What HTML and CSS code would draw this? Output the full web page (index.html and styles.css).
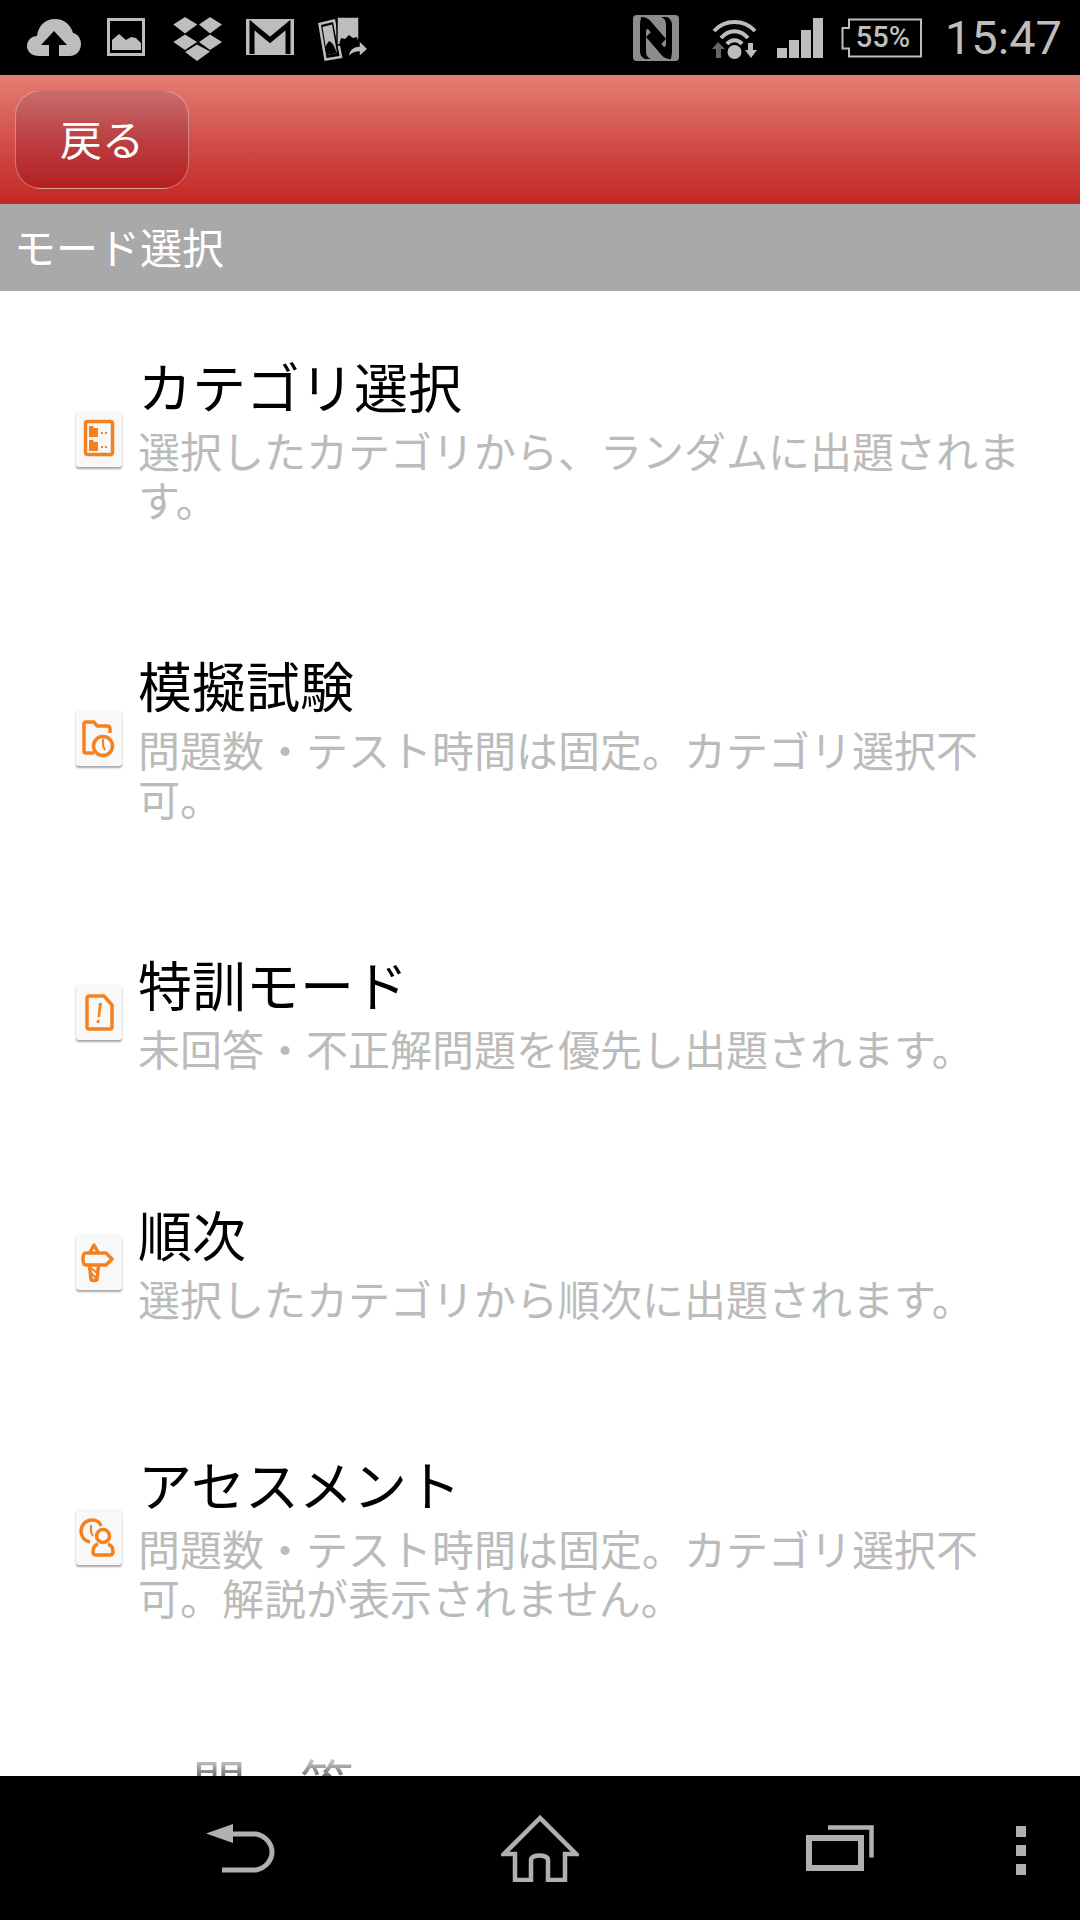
FILE: index.html
```html
<!DOCTYPE html>
<html lang="ja">
  <head>
    <title>モード選択</title>
    <link rel="stylesheet" href="styles.css">
  </head>
  <body>
    <div class="app">
      <div class="status-bar">
        <div class="status-left">
          <svg width="56" height="42" viewBox="0 0 56 42"><path class="st" d="M12 39C5 39 0 35 0 29c0-6 5-10 10-10C11 9 18 2 28 2c9 0 16 6 18 14 5 1 8 6 8 11 0 7-5 12-11 12z"/><path d="M27 14 14 28h8v13h10V28h8z" fill="#000"/></svg>
          <svg width="42" height="42" viewBox="0 0 42 42"><rect class="st-line" x="1.5" y="2.5" width="35" height="35" stroke-width="3"/><path class="st" d="M5 33V23l7-6 7 6 5-3 5 1 5 5v7z"/></svg>
          <svg width="49" height="46" viewBox="0 0 49 46"><path class="st" d="M.3 9.500 12 2l12.300 7.500L12 18.500zM26 9.500 37 2l12 7.500-12 9zM.3 27 12 19.500 24 27l-12 8zM26 27l11-7.500L49 27l-12 8zM24 29.500l13 7-13 9.500-12-9z"/></svg>
          <svg width="48" height="37" viewBox="0 0 48 37"><path class="st" d="M0 0h48v36H0z"/><path d="M6 35V6l18 15L42 6v29" fill="none" stroke="#000" stroke-width="5"/></svg>
          <svg width="50" height="46" viewBox="0 0 50 46"><path class="st-line" d="M1.500 9 16 5.500 23 42 7.500 44.500z" stroke-width="2.500"/><path class="st" d="M4.500 12 14 9.500 19 38 9 40z"/><path d="M7 32l4-6 3 2 2 3 3 7-10 2z" fill="#000"/><path class="st" d="M19 2h22v28H19z" stroke="#000" stroke-width="1.500"/><path d="M21 30l2-7 4 1 4-4 4 3 4-1 2 8z" fill="#000"/><path class="st" d="M30 43c0-8 5-12 11-12v-6l9 9-9 8v-5c-4 0-8 2-11 6z" stroke="#000" stroke-width="1.500"/></svg>
        </div>
        <div class="status-right">
          <svg width="61" height="46" viewBox="0 0 61 46"><rect x="0" y="0" width="46" height="46" rx="4" fill="#8c8c8c"/><path id="nfc-band" d="M8 2c6 0 8 2 12 7l13 15-5 5L15 14c-2 0-2 2-2 4v18c0 4 1 6 5 8h-6c-4-2-5-5-5-8V10c0-4 1-6 1-8z" fill="#000"/><use href="#nfc-band" transform="rotate(180 23 23)"/></svg>
          <svg width="47" height="42" viewBox="0 0 47 42"><g class="st-line" stroke-width="4"><path d="M2 14C13 2 32 2 43 14"/><path d="M9 21C17 12 28 12 36 21"/><path d="M15 27C19 22 26 22 30 27"/></g><circle class="st" cx="22.5" cy="35" r="7"/><path d="M6 25l7 7H9v9H4v-9H0z" fill="#666"/><path class="st" d="M36 26h5v7h4l-6 8-6-8h3z"/></svg>
          <svg width="46" height="40" viewBox="0 0 46 40"><path class="st" d="M0 30h10v10H0zM12 22h10v18H12zM24 12h10v28H24zM36 0h10v40H36z"/></svg>
          <svg width="86" height="40" viewBox="0 0 86 40"><path class="st-line" d="M8 1.5h72v37H8v-8H1.5V10H8z" stroke-width="2"/><text x="42" y="29" class="batt-text" text-anchor="middle">55%</text></svg>
          <div class="clock">15:47</div>
        </div>
      </div>

      <div class="red-bar">
        <div class="back-btn">戻る</div>
      </div>
      <div class="section-bar">モード選択</div>

      <div class="mode-list">
        <div class="mode-row">
          <div class="mode-icon">
            <svg width="46" height="56" viewBox="0 0 46 56"><rect class="ic" x="9.5" y="10.5" width="27" height="33" rx="2"/><path class="ic-fill" d="M13 15h4l1 2h4v9H13zM13 29h4l1 2h4v9H13z"/><path class="ic-fill" d="M25 21h2v2h-2zM29 21h2v2h-2zM25 35h2v2h-2zM29 35h2v2h-2z"/></svg>
          </div>
          <div class="mode-text">
            <div class="mode-title">カテゴリ選択</div>
            <div class="mode-desc">選択したカテゴリから、ランダムに出題されます。</div>
          </div>
        </div>
        <div class="mode-row">
          <div class="mode-icon">
            <svg width="46" height="56" viewBox="0 0 46 56"><path class="ic" d="M18 43H10c-1.500 0-2-1-2-2V14c0-1.500 1-2 2-2h8l3 4h10c2 0 3 1 3 3v4"/><circle class="ic" cx="27" cy="36" r="9.500"/><path class="ic-thin" d="M27 29v7l2 4"/></svg>
          </div>
          <div class="mode-text">
            <div class="mode-title">模擬試験</div>
            <div class="mode-desc">問題数・テスト時間は固定。カテゴリ選択不可。</div>
          </div>
        </div>
        <div class="mode-row">
          <div class="mode-icon">
            <svg width="46" height="56" viewBox="0 0 46 56"><path class="ic" d="M13 12h15l8 9v22c0 1.500-1 2-2 2H13c-1 0-2-.5-2-2V14c0-1 1-2 2-2z"/><path class="ic-fill" d="M23 19h3l-2 14h-2.500zM21 36h2.800l-.5 3h-2.800z"/></svg>
          </div>
          <div class="mode-text">
            <div class="mode-title">特訓モード</div>
            <div class="mode-desc">未回答・不正解問題を優先し出題されます。</div>
          </div>
        </div>
        <div class="mode-row">
          <div class="mode-icon">
            <svg width="46" height="56" viewBox="0 0 46 56"><path class="ic" d="M14 18l4-7 4 7"/><path class="ic" d="M10 19h20l6 6-6 6H10c-2 0-3-3-3-6s1-6 3-6z"/><path class="ic" d="M13.500 32l1.500 13c0 2 6 2 6 0l1.500-13"/><path class="ic-thin" d="M15 34l6 5M15 39l6 6"/></svg>
          </div>
          <div class="mode-text">
            <div class="mode-title">順次</div>
            <div class="mode-desc">選択したカテゴリから順次に出題されます。</div>
          </div>
        </div>
        <div class="mode-row">
          <div class="mode-icon">
            <svg width="46" height="56" viewBox="0 0 46 56"><path class="ic" d="M14 33C8 32 5 27 5 22c0-6 5-11 11-11 4 0 8 2 9 6"/><path class="ic-thin" d="M15 16v7l2 4"/><circle class="ic" cx="27" cy="27" r="6.500"/><path class="ic" d="M22 35c-3 1-5 3-5 8 0 2 1 3 3 3h14c2 0 3-1 3-3 0-5-2-7-5-8"/></svg>
          </div>
          <div class="mode-text">
            <div class="mode-title">アセスメント</div>
            <div class="mode-desc">問題数・テスト時間は固定。カテゴリ選択不可。解説が表示されません。</div>
          </div>
        </div>
        <div class="mode-row">
          <div class="mode-text">
            <div class="mode-title mode-title-last">一問一答</div>
          </div>
        </div>
        <div class="list-fade"></div>
      </div>

      <div class="nav-bar">
        <svg width="69" height="49" viewBox="0 0 69 49"><path class="nav-fill" d="M0 9.500 27 0v19z"/><path class="nav-line" d="M25 10H50C60 12 66 20 66 28S60 44 50 46H16" stroke-width="5"/></svg>
        <svg width="78" height="68" viewBox="0 0 78 68"><path class="nav-line" d="M39 4 3 40h11v26h16V46c0-6 17-6 17 0v20h17V40h11z" stroke-width="4.500"/></svg>
        <svg width="68" height="46" viewBox="0 0 68 46"><rect class="nav-line" x="3" y="13" width="52" height="30" stroke-width="6"/><path class="nav-line" d="M22 2.500h43.500v30" stroke-width="4.500"/></svg>
        <div class="nav-dots">
          <span></span>
          <span></span>
          <span></span>
        </div>
      </div>
    </div>
  </body>
</html>
```

FILE: styles.css
```css
body {
  margin: 0;
  font-family: "Noto Sans CJK JP", "Noto Sans", sans-serif;
  background-color: #000;
}

.app {
  width: 1080px;
  height: 1920px;
  display: flex;
  flex-direction: column;
  overflow: hidden;
}

.status-bar {
  height: 75px;
  flex: none;
  display: flex;
  align-items: center;
  justify-content: space-between;
  padding: 0 18px 0 27px;
  background-color: #000;
}

.status-left {
  display: flex;
  align-items: center;
  gap: 24px;
}

.status-right {
  display: flex;
  align-items: center;
  gap: 18px;
}

.st {
  fill: #bdbdbd;
}

.st-line {
  fill: none;
  stroke: #bdbdbd;
}

.batt-text {
  font-family: Roboto, sans-serif;
  font-size: 29px;
  font-weight: 500;
  fill: #bdbdbd;
}

.clock {
  font-family: Roboto, sans-serif;
  font-size: 47px;
  font-weight: 400;
  color: #bdbdbd;
}

.red-bar {
  height: 129px;
  flex: none;
  display: flex;
  align-items: center;
  padding-left: 15px;
  background: linear-gradient(#e57e74, #d04b47 55%, #c32823);
  box-sizing: border-box;
}

.back-btn {
  width: 174px;
  height: 99px;
  box-sizing: border-box;
  display: flex;
  align-items: center;
  justify-content: center;
  padding-bottom: 4px;
  border: 1px solid rgba(255, 255, 255, 0.35);
  border-radius: 26px;
  background: linear-gradient(#c86e6c, #bb4044 50%, #b51f20);
  color: #fff;
  font-size: 42px;
}

.section-bar {
  height: 87px;
  flex: none;
  box-sizing: border-box;
  padding-left: 14px;
  line-height: 83px;
  background-color: #a9a9a9;
  color: #fff;
  font-size: 42px;
}

.mode-list {
  position: relative;
  flex: 1;
  overflow: hidden;
  background-color: #fff;
}

.mode-row {
  display: flex;
  align-items: center;
  gap: 16px;
  padding: 63px 50px 67px 76px;
}

.mode-icon {
  width: 46px;
  height: 56px;
  flex: none;
  background-color: #f8f8f8;
  border-radius: 3px;
  box-shadow: 0 2px 2px rgba(0, 0, 0, 0.35);
}

.mode-icon svg {
  display: block;
}

.ic {
  fill: none;
  stroke: #f5811e;
  stroke-width: 3.5;
  stroke-linejoin: round;
}

.ic-thin {
  fill: none;
  stroke: #f5811e;
  stroke-width: 2;
}

.ic-fill {
  fill: #f5811e;
}

.mode-text {
  min-width: 0;
}

.mode-title {
  margin-bottom: 7px;
  color: #000;
  font-size: 54px;
  line-height: 64px;
}

.mode-title-last {
  margin-left: 62px;
}

.mode-desc {
  color: #bbb;
  font-size: 42px;
  line-height: 49px;
}

.list-fade {
  position: absolute;
  left: 0;
  right: 0;
  bottom: 0;
  height: 26px;
  background: linear-gradient(rgba(255, 255, 255, 1), rgba(255, 255, 255, 0.45));
}

.nav-bar {
  height: 144px;
  flex: none;
  box-sizing: border-box;
  display: grid;
  grid-template-columns: 300px 300px 300px 62px;
  justify-items: center;
  align-items: center;
  padding-left: 90px;
  background-color: #000;
}

.nav-fill {
  fill: #b0b0b0;
}

.nav-line {
  fill: none;
  stroke: #b0b0b0;
}

.nav-dots {
  display: flex;
  flex-direction: column;
  gap: 8px;
  margin-top: 4px;
}

.nav-dots span {
  width: 10px;
  height: 11px;
  background-color: #b0b0b0;
}
```
